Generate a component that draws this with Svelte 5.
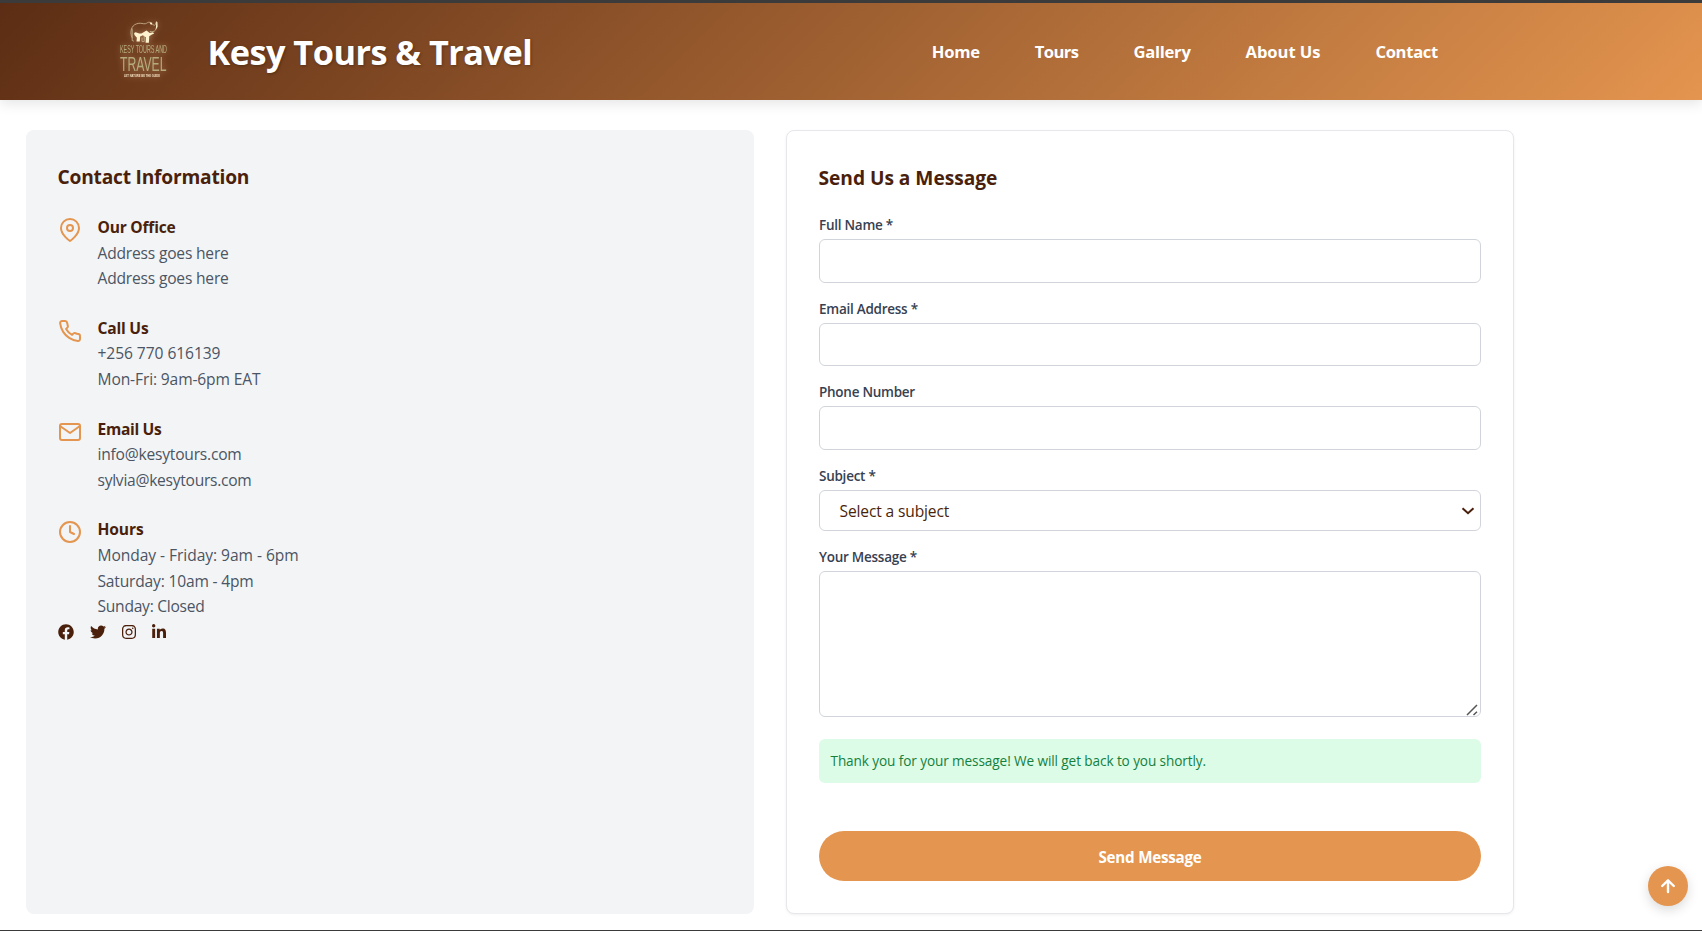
<script>
  // Each text carries its own letter-spacing in pixels.
  const nav = [
    { text: 'Home', track: -0.25 },
    { text: 'Tours', track: -0.6 },
    { text: 'Gallery', track: -0.26 },
    { text: 'About Us', track: -0.08 },
    { text: 'Contact', track: -0.3 }
  ];

  const info = [
    {
      icon: 'pin',
      title: { text: 'Our Office', track: -0.23 },
      lines: [
        { text: 'Address goes here', track: -0.2 },
        { text: 'Address goes here', track: -0.2 }
      ]
    },
    {
      icon: 'phone',
      title: { text: 'Call Us', track: -0.21 },
      lines: [
        { text: '+256 770 616139', track: -0.07 },
        { text: 'Mon-Fri: 9am-6pm EAT', track: -0.13 }
      ]
    },
    {
      icon: 'mail',
      title: { text: 'Email Us', track: -0.32 },
      lines: [
        { text: 'info@kesytours.com', track: -0.22 },
        { text: 'sylvia@kesytours.com', track: -0.27 }
      ]
    },
    {
      icon: 'clock',
      title: { text: 'Hours', track: -0.13 },
      lines: [
        { text: 'Monday - Friday: 9am - 6pm', track: -0.06 },
        { text: 'Saturday: 10am - 4pm', track: -0.19 },
        { text: 'Sunday: Closed', track: -0.26 }
      ]
    }
  ];

  const fields = ['Full Name *', 'Email Address *', 'Phone Number'];
</script>

<div class="page">
  <header>
    <svg class="logo" width="64" height="70" viewBox="0 0 64 70">
      <g transform="translate(0 1)">
        <path fill="none" stroke="#cdbb94" stroke-width=".8" stroke-linecap="round" stroke-linejoin="round" d="M21 23.500c-1.400-2.600-1.600-7 .1-10 1.200-2.300 3.300-3.500 6-4.100 3-.7 5 .8 7.400.3 1.500-.4 2.400-1.700 4-1.600l1.200 1.800 2.200.300c.5 1.400 1.700 1.600 2.500.300l1-2.900.5 4.600-1.300 3.800c-1.500 2-3.600 1.700-5.400 1.500M21.200 15v11.500l1.300.5M31 24v3.600h2.200V22" />
        <path fill="#fff3cf" d="M35.500 16.500l3.200 2.400 3.300-.7 1.100 1.300-2.600 1.200-2.300 1.600-.3 6.500h-3.300l.3-5.600-3.100-1.900-1.400.6-1.300.7-.3 4.900h-3.300l.4-3.800-2.400-2.600-.4-2 1.500-.8 3.600 1.300 2.300-.2zM39 8.200l2.200.5-.4 1.900-1.500-.4zM45.400 7.700l1 .2.100 5-1.700 2.500.3-3.600z" />
      </g>
      <g class="script" fill="#b5ab7b">
        <text x="9" y="39.500" font-size="10.500" textLength="47" lengthAdjust="spacingAndGlyphs">KESY TOURS AND</text>
        <text x="9" y="58" font-size="19.500" textLength="46.500" lengthAdjust="spacingAndGlyphs">TRAVEL</text>
      </g>
      <text class="tagline" x="13" y="63.700" font-size="3" textLength="36" lengthAdjust="spacingAndGlyphs">LET NATURE BE THE GUIDE</text>
    </svg>
    <h1>Kesy Tours &amp; Travel</h1>
    <nav>
      {#each nav as item}
        <a href="#top" style:letter-spacing="{item.track}px">{item.text}</a>
      {/each}
    </nav>
  </header>

  <main>
    <section class="info">
      <h2>Contact Information</h2>
      {#each info as item}
        <div class="item">
          <svg class="icon" width="24" height="24" viewBox="0 0 24 24">
            {#if item.icon === 'pin'}
              <path d="M21 10c0 7-9 13-9 13s-9-6-9-13a9 9 0 0 1 18 0z" /><circle cx="12" cy="10" r="3" />
            {:else if item.icon === 'phone'}
              <path d="M22 16.920v3a2 2 0 0 1-2.180 2 19.790 19.790 0 0 1-8.630-3.070 19.500 19.500 0 0 1-6-6 19.790 19.790 0 0 1-3.070-8.670A2 2 0 0 1 4.110 2h3a2 2 0 0 1 2 1.720 12.840 12.840 0 0 0 .7 2.810 2 2 0 0 1-.45 2.110L8.090 9.910a16 16 0 0 0 6 6l1.270-1.270a2 2 0 0 1 2.110-.45 12.840 12.840 0 0 0 2.810.7A2 2 0 0 1 22 16.920z" />
            {:else if item.icon === 'mail'}
              <path d="M4 4h16c1.100 0 2 .9 2 2v12c0 1.100-.9 2-2 2H4c-1.100 0-2-.9-2-2V6c0-1.100.9-2 2-2z" /><polyline points="22,6 12,13 2,6" />
            {:else}
              <circle cx="12" cy="12" r="10" /><polyline points="12 6 12 12 16 14" />
            {/if}
          </svg>
          <div class="lines">
            <h3 style:letter-spacing="{item.title.track}px">{item.title.text}</h3>
            {#each item.lines as line}
              <p style:letter-spacing="{line.track}px">{line.text}</p>
            {/each}
          </div>
        </div>
      {/each}
      <div class="social">
        <svg width="16" height="16" viewBox="0 0 512 512"><path d="M504 256C504 119 393 8 256 8S8 119 8 256c0 123.780 90.690 226.380 209.250 245V327.690h-63V256h63v-54.640c0-62.150 37-96.480 93.670-96.480 27.140 0 55.520 4.840 55.520 4.840v61h-31.280c-30.800 0-40.410 19.120-40.410 38.730V256h68.780l-11 71.690h-57.780V501C413.310 482.380 504 379.780 504 256z" /></svg>
        <svg width="16" height="16" viewBox="0 0 512 512"><path d="M459.370 151.716c.325 4.548.325 9.097.325 13.645 0 138.720-105.583 298.558-298.558 298.558-59.452 0-114.680-17.219-161.137-47.106 8.447.974 16.568 1.299 25.340 1.299 49.055 0 94.213-16.568 130.274-44.832-46.132-.975-84.792-31.188-98.112-72.772 6.498.974 12.995 1.624 19.818 1.624 9.421 0 18.843-1.300 27.614-3.573-48.081-9.747-84.143-51.980-84.143-102.985v-1.299c13.969 7.797 30.214 12.670 47.431 13.319-28.264-18.843-46.781-51.005-46.781-87.391 0-19.492 5.197-37.360 14.294-52.954 51.655 63.675 129.300 105.258 216.365 109.807-1.624-7.797-2.599-15.918-2.599-24.040 0-57.828 46.782-104.934 104.934-104.934 30.213 0 57.502 12.670 76.670 33.137 23.715-4.548 46.456-13.320 66.599-25.340-7.798 24.366-24.366 44.833-46.132 57.827 21.117-2.273 41.584-8.122 60.426-16.243-14.292 20.791-32.161 39.308-52.628 54.253z" /></svg>
        <svg width="14" height="16" viewBox="0 0 448 512"><path d="M224.100 141c-63.600 0-114.900 51.300-114.900 114.900s51.300 114.900 114.900 114.900S339 319.500 339 255.900 287.700 141 224.100 141zm0 189.600c-41.100 0-74.700-33.500-74.700-74.700s33.500-74.700 74.700-74.700 74.700 33.500 74.700 74.700-33.600 74.700-74.700 74.700zm146.400-194.300c0 14.900-12 26.800-26.800 26.800-14.900 0-26.800-12-26.800-26.800s12-26.800 26.800-26.800 26.800 12 26.800 26.800zm76.100 27.200c-1.700-35.900-9.900-67.700-36.200-93.900-26.200-26.200-58-34.400-93.900-36.200-37-2.100-147.900-2.100-184.900 0-35.800 1.700-67.600 9.900-93.900 36.100s-34.400 58-36.200 93.900c-2.100 37-2.100 147.900 0 184.900 1.700 35.900 9.900 67.700 36.200 93.900s58 34.400 93.900 36.200c37 2.100 147.900 2.100 184.900 0 35.900-1.700 67.700-9.900 93.900-36.200 26.200-26.200 34.400-58 36.200-93.900 2.100-37 2.100-147.800 0-184.800zM398.800 388c-7.800 19.600-22.900 34.700-42.600 42.600-29.500 11.700-99.500 9-132.100 9s-102.700 2.600-132.100-9c-19.600-7.800-34.700-22.900-42.600-42.600-11.700-29.500-9-99.500-9-132.100s-2.600-102.700 9-132.100c7.800-19.600 22.900-34.700 42.600-42.600 29.500-11.700 99.500-9 132.100-9s102.700-2.600 132.100 9c19.600 7.800 34.700 22.900 42.600 42.600 11.700 29.500 9 99.500 9 132.100s2.700 102.700-9 132.100z" /></svg>
        <svg width="14" height="16" viewBox="0 0 448 512"><path d="M100.280 448H7.400V148.900h92.880zM53.790 108.100C24.090 108.100 0 83.500 0 53.800a53.790 53.790 0 0 1 107.580 0c0 29.700-24.100 54.300-53.790 54.300zM447.900 448h-92.680V302.400c0-34.700-.7-79.200-48.290-79.200-48.290 0-55.690 37.700-55.690 76.700V448h-92.780V148.900h89.080v40.800h1.300c12.400-23.500 42.690-48.300 87.880-48.300 94 0 111.280 61.900 111.280 142.300V448z" /></svg>
      </div>
    </section>

    <section class="form">
      <h2>Send Us a Message</h2>
      {#each fields as field}
        <label>
          <span>{field}</span>
          <input type="text" />
        </label>
      {/each}
      <label>
        <span>Subject *</span>
        <div class="select">
          Select a subject
          <svg width="14" height="8" viewBox="0 0 14 8"><path d="M1.500 1.200 7 6.200l5.500-5" /></svg>
        </div>
      </label>
      <label>
        <span>Your Message *</span>
        <div class="message">
          <textarea></textarea>
          <svg width="13" height="12" viewBox="0 0 13 12"><path d="M1 11 11 1M7.500 11l3.500-3.300" /></svg>
        </div>
      </label>
      <div class="alert">Thank you for your message! We will get back to you shortly.</div>
      <button class="send">Send Message</button>
    </section>
  </main>

  <button class="to-top" aria-label="Back to top">
    <svg width="16" height="16" viewBox="0 0 16 16"><path d="M8 14V2.500M2.200 8 8 2.300 13.800 8" /></svg>
  </button>
</div>

<style>
  :global(body) {
    margin: 0;
    background: #fff;
    font-family: 'Open Sans', sans-serif;
    color: #4a1f0b;
  }
  .page {
    position: relative;
    box-sizing: border-box;
    height: 931px;
    overflow: hidden;
    border-top: 3px solid #3b3b3b;
    border-bottom: 1px solid #3b3b3b;
  }
  header {
    box-sizing: border-box;
    height: 97px;
    padding: 0 264px 0 111px;
    display: flex;
    align-items: center;
    background: linear-gradient(135deg, #5c2d14, #e4954f);
    box-shadow: 0 4px 12px rgba(0, 0, 0, 0.1);
    color: #fff;
  }
  .logo {
    margin-top: -7px;
    overflow: visible;
    filter: drop-shadow(0 0 3px rgba(255, 225, 180, 0.45));
  }
  .script {
    font-family: 'Liberation Sans', sans-serif;
    font-weight: 400;
  }
  .tagline {
    font-family: 'Liberation Sans', sans-serif;
    font-weight: 700;
    fill: #f3dfc0;
  }
  h1 {
    margin: 0 0 0 32.5px;
    font-size: 34.3px;
    line-height: 48px;
    font-weight: 700;
    letter-spacing: -0.53px;
    text-shadow: 1px 1px 3px rgba(0, 0, 0, 0.3);
    white-space: nowrap;
  }
  nav {
    display: flex;
    gap: 55px;
    margin-left: auto;
    font-size: 16.6px;
    font-weight: 700;
  }
  nav a {
    color: #fff;
    text-decoration: none;
    white-space: nowrap;
  }
  main {
    display: grid;
    grid-template-columns: 728px 728px;
    gap: 32px;
    padding: 30px 26px 0;
  }
  section {
    box-sizing: border-box;
    height: 784px;
    border-radius: 8px;
    padding: 32px;
  }
  .info {
    background: #f3f4f6;
  }
  .form {
    border: 1px solid #e5e7eb;
    background: #fff;
    box-shadow: 0 1px 3px rgba(0, 0, 0, 0.06);
  }
  h2 {
    margin: 0 0 23px -0.5px;
    padding-top: 1px;
    font-size: 19.2px;
    line-height: 28px;
    font-weight: 700;
    letter-spacing: -0.22px;
  }
  .form h2 {
    letter-spacing: -0.04px;
  }
  .item {
    display: flex;
    gap: 15.5px;
    margin-bottom: 23px;
  }
  .item:nth-of-type(4) {
    margin-bottom: -1px;
  }
  .icon {
    flex: none;
    margin-top: 4px;
    fill: none;
    stroke: #e4954f;
    stroke-width: 2;
    stroke-linecap: round;
    stroke-linejoin: round;
  }
  .lines {
    padding-top: 1px;
  }
  h3,
  p {
    margin: 0;
    font-size: 15.6px;
    line-height: 25.6px;
  }
  h3 {
    font-weight: 700;
  }
  p {
    color: #4b5563;
  }
  .social {
    display: flex;
    gap: 16px;
    padding-top: 5px;
  }
  .social svg {
    fill: #4a1f0b;
  }
  label {
    display: block;
    margin-bottom: 16.2px;
    font-size: 13.5px;
    font-weight: 600;
    color: #374151;
    letter-spacing: -0.26px;
  }
  label > span {
    display: block;
    line-height: 19.9px;
    padding-top: 1px;
    margin-bottom: 3px;
  }
  input,
  textarea,
  .select {
    display: block;
    box-sizing: border-box;
    width: 100%;
    border: 1px solid #d1d5db;
    border-radius: 6px;
    background: #fff;
    outline: none;
  }
  input {
    height: 43.6px;
  }
  .select {
    display: flex;
    align-items: center;
    justify-content: space-between;
    height: 41px;
    padding: 2px 5px 0 19.5px;
    font-size: 15.6px;
    font-weight: 400;
    letter-spacing: -0.15px;
    color: #4a1f0b;
  }
  .select svg {
    fill: none;
    stroke: #4a1f0b;
    stroke-width: 2;
  }
  .message {
    position: relative;
  }
  textarea {
    height: 146px;
    resize: none;
  }
  .message svg {
    position: absolute;
    right: 2px;
    bottom: 1px;
    fill: none;
    stroke: #555;
    stroke-width: 1.5;
  }
  .alert {
    margin-top: 22px;
    height: 44px;
    line-height: 44px;
    padding-left: 11.5px;
    border-radius: 6px;
    background: #dcfce7;
    color: #15803d;
    font-size: 13.6px;
    letter-spacing: -0.1px;
  }
  .send {
    display: block;
    width: 100%;
    height: 50px;
    margin-top: 48px;
    padding: 1px 0 0;
    border: 0;
    border-radius: 25px;
    background: #e4954f;
    color: #fff;
    font: 700 15.2px 'Open Sans', sans-serif;
    letter-spacing: -0.25px;
  }
  .to-top {
    position: absolute;
    right: 14px;
    top: 863px;
    width: 40px;
    height: 40px;
    padding: 0;
    border: 0;
    border-radius: 50%;
    background: #e4954f;
    box-shadow: 0 4px 12px rgba(0, 0, 0, 0.15);
    display: flex;
    align-items: center;
    justify-content: center;
  }
  .to-top svg {
    fill: none;
    stroke: #fff;
    stroke-width: 2.4;
    stroke-linecap: round;
    stroke-linejoin: round;
  }
</style>
